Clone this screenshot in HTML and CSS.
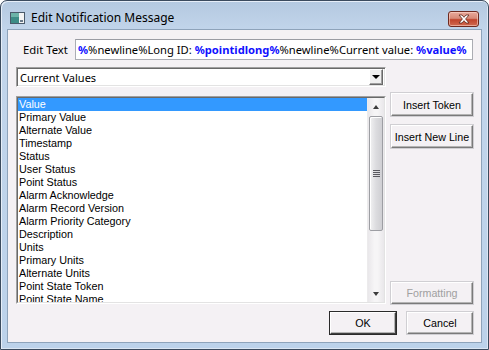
FILE: index.html
```html
<!DOCTYPE html>
<html>
<head>
<meta charset="utf-8">
<link rel="stylesheet" href="styles.css">
</head>
<body>
<div class="window">
  <div class="titlebar">
    <svg class="appicon" width="15" height="12" viewBox="0 0 15 12">
      <rect x="0.5" y="0.5" width="14" height="11" fill="#f4f4f4" stroke="#4a5a6a"/>
      <rect x="1" y="1" width="8" height="10" fill="#3d8c86"/>
      <rect x="1" y="1" width="8" height="4" fill="#6cb3a8"/>
      <rect x="10" y="8" width="3" height="2" fill="#6a7a8a"/>
    </svg>
    <span class="title">Edit Notification Message</span>
    <div class="close">
      <svg width="16" height="10" viewBox="0 0 16 10">
        <path d="M3 1 L6 1 L8 3.3 L10 1 L13 1 L9.6 5 L13 9 L10 9 L8 6.7 L6 9 L3 9 L6.4 5 Z" fill="#ffffff" stroke="#5a2418" stroke-width="0.8" stroke-linejoin="round"/>
      </svg>
    </div>
  </div>
  <div class="client">
    <div class="row-edit">
      <span class="label">Edit Text</span>
      <div class="textbox"><span class="tok">%</span>%newline%Long ID: <span class="tok">%pointidlong%</span>%newline%Current value: <span class="tok">%value%</span></div>
    </div>
    <div class="combo">
      <span class="combo-text">Current Values</span>
      <div class="combo-btn"><span class="tri-down"></span></div>
    </div>
    <div class="main">
      <div class="listbox">
        <div class="listbox-inner">
          <ul class="items">
            <li class="sel">Value</li>
            <li>Primary Value</li>
            <li>Alternate Value</li>
            <li>Timestamp</li>
            <li>Status</li>
            <li>User Status</li>
            <li>Point Status</li>
            <li>Alarm Acknowledge</li>
            <li>Alarm Record Version</li>
            <li>Alarm Priority Category</li>
            <li>Description</li>
            <li>Units</li>
            <li>Primary Units</li>
            <li>Alternate Units</li>
            <li>Point State Token</li>
            <li>Point State Name</li>
          </ul>
          <div class="scrollbar">
            <div class="sb-arrow"><span class="sb-up"></span></div>
            <div class="sb-track">
              <div class="sb-thumb">
                <div class="grip"><i></i><i></i><i></i><i></i></div>
              </div>
            </div>
            <div class="sb-arrow"><span class="sb-down"></span></div>
          </div>
        </div>
      </div>
      <div class="side">
        <button class="btn">Insert Token</button>
        <button class="btn">Insert New Line</button>
        <button class="btn disabled bottom">Formatting</button>
      </div>
    </div>
    <div class="footer">
      <button class="btn default">OK</button>
      <button class="btn">Cancel</button>
    </div>
  </div>
</div>
</body>
</html>
```
FILE: styles.css
```css
html, body {
  margin: 0;
  padding: 0;
  background: #ffffff;
}
* { box-sizing: border-box; }

.window {
  width: 489px;
  height: 350px;
  border: 1px solid #3b4b5e;
  border-radius: 7px 7px 0 0;
  background: linear-gradient(to bottom, #b4c9e0 0px, #c2d5eb 30px, #bcd2ea 100%);
  box-shadow: inset 1px 1px 0 #e6eef8, inset -1px -1px 0 #dbe6f3;
  display: flex;
  flex-direction: column;
  font-family: "Liberation Sans", Arial, sans-serif;
  font-size: 11px;
  color: #000;
}

.titlebar {
  height: 28px;
  display: flex;
  align-items: flex-start;
  padding-left: 9px;
  padding-right: 9px;
}
.appicon { margin-top: 11px; }
.title {
  margin-left: 6px;
  margin-top: 9px;
  font-family: "Noto Sans", "Open Sans", sans-serif;
  font-size: 12px;
  line-height: 16px;
  color: #000;
}
.close {
  margin-left: auto;
  margin-top: 10px;
  width: 31px;
  height: 16px;
  border: 1px solid #6e2a20;
  border-radius: 3px;
  background: linear-gradient(to bottom, #e9a99b 0%, #d88a78 45%, #c0442c 55%, #d06a50 100%);
  box-shadow: inset 0 0 0 1px rgba(255,220,210,0.55);
  display: flex;
  align-items: center;
  justify-content: center;
}
.close svg { display: block; }

.client {
  margin: 0 6px 6px 6px;
  flex: 1;
  border: 1px solid #8ea3ba;
  background: #f4f1f4;
  padding: 9px 8px 8px 8px;
  display: flex;
  flex-direction: column;
}

.row-edit {
  display: flex;
  align-items: center;
  height: 21px;
}
.label {
  margin-left: 7px;
  width: 52px;
  font-family: "Noto Sans", "Open Sans", sans-serif;
  font-size: 11.3px;
}
.textbox {
  width: 398px;
  height: 21px;
  border: 1px solid #abadb3;
  border-top-color: #9a9ca3;
  background: #fff;
  padding-left: 2px;
  font-family: "Noto Sans", "Open Sans", sans-serif;
  font-size: 11.2px;
  line-height: 19px;
  white-space: nowrap;
  overflow: hidden;
}
.tok { color: #1010ff; font-weight: bold; }

.combo {
  margin-top: 7px;
  width: 370px;
  height: 20px;
  background: #fff;
  border: 1px solid;
  border-color: #a0a0a0 #ffffff #ffffff #a0a0a0;
  box-shadow: inset 1px 1px 0 #696969, inset -1px -1px 0 #e3e3e3;
  display: flex;
  align-items: center;
  padding: 2px;
}
.combo-text {
  flex: 1;
  padding-left: 1px;
  font-family: "Noto Sans", "Open Sans", sans-serif;
  font-size: 11px;
}
.combo-btn {
  width: 14px;
  height: 16px;
  background: #f0f0f0;
  border: 1px solid;
  border-color: #ffffff #696969 #696969 #ffffff;
  box-shadow: inset -1px -1px 0 #a0a0a0;
  display: flex;
  align-items: center;
  justify-content: center;
}
.tri-down {
  width: 0; height: 0;
  border-left: 4px solid transparent;
  border-right: 4px solid transparent;
  border-top: 4px solid #000;
}

.main {
  margin-top: 6px;
  display: flex;
  align-items: flex-start;
  height: 211px;
}
.listbox {
  margin-top: 3px;
  width: 370px;
  height: 208px;
  border: 1px solid;
  border-color: #a0a0a0 #ffffff #ffffff #a0a0a0;
}
.listbox-inner {
  width: 100%;
  height: 100%;
  border: 1px solid;
  border-color: #696969 #e3e3e3 #e3e3e3 #696969;
  background: #fff;
  display: flex;
  overflow: hidden;
}
.items {
  list-style: none;
  margin: 0;
  padding: 0;
  flex: 1;
  overflow: hidden;
}
.items li {
  height: 13px;
  line-height: 13px;
  padding-left: 1px;
  white-space: nowrap;
  font-size: 10.8px;
}
.items li.sel {
  background: #3399ff;
  color: #fff;
}

.scrollbar {
  width: 17px;
  display: flex;
  flex-direction: column;
  background: linear-gradient(to right, #e9e7ea, #f6f5f6 40%, #f6f5f6 60%, #e9e7ea);
  border-left: 1px solid #ecebec;
}
.sb-arrow {
  height: 17px;
  display: flex;
  align-items: center;
  justify-content: center;
}
.sb-up {
  width: 0; height: 0;
  border-left: 3.5px solid transparent;
  border-right: 3.5px solid transparent;
  border-bottom: 4px solid #3c3c3c;
}
.sb-down {
  width: 0; height: 0;
  border-left: 3.5px solid transparent;
  border-right: 3.5px solid transparent;
  border-top: 4px solid #3c3c3c;
}
.sb-track {
  flex: 1;
  padding-top: 1px;
}
.sb-thumb {
  margin: 0 1px;
  height: 115px;
  border: 1px solid #9d9ea3;
  border-radius: 2px;
  background: linear-gradient(to right, #f2f2f3, #dcdcdf 50%, #cfcfd3);
  box-shadow: inset 1px 1px 0 #ffffff;
  display: flex;
  align-items: center;
  justify-content: center;
}
.grip {
  display: flex;
  flex-direction: column;
  gap: 1px;
}
.grip i {
  display: block;
  width: 7px;
  height: 1px;
  background: #5a5a60;
}

.side {
  margin-left: 5px;
  width: 82px;
  height: 211px;
  display: flex;
  flex-direction: column;
  gap: 9px;
}
.btn {
  width: 82px;
  height: 23px;
  font-family: "Liberation Sans", Arial, sans-serif;
  font-size: 10.7px;
  color: #000;
  background: #f4f1f4;
  border: 1px solid;
  border-color: #ffffff #7a7a7a #7a7a7a #ffffff;
  box-shadow: inset -1px -1px 0 #b4b4b4;
  padding: 0;
  margin: 0;
  outline: 1px solid #d0cfd3;
  outline-offset: 0;
}
.btn.bottom { margin-top: auto; height: 22px; }
.btn.disabled { color: #a0a0a0; }

.footer {
  margin-top: 8px;
  display: flex;
  justify-content: flex-end;
  gap: 11px;
}
.footer .btn {
  width: 66px;
  height: 22px;
}
.btn.default {
  border-color: #ffffff #404040 #404040 #ffffff;
  outline: 1px solid #2a2a2a;
}
```
